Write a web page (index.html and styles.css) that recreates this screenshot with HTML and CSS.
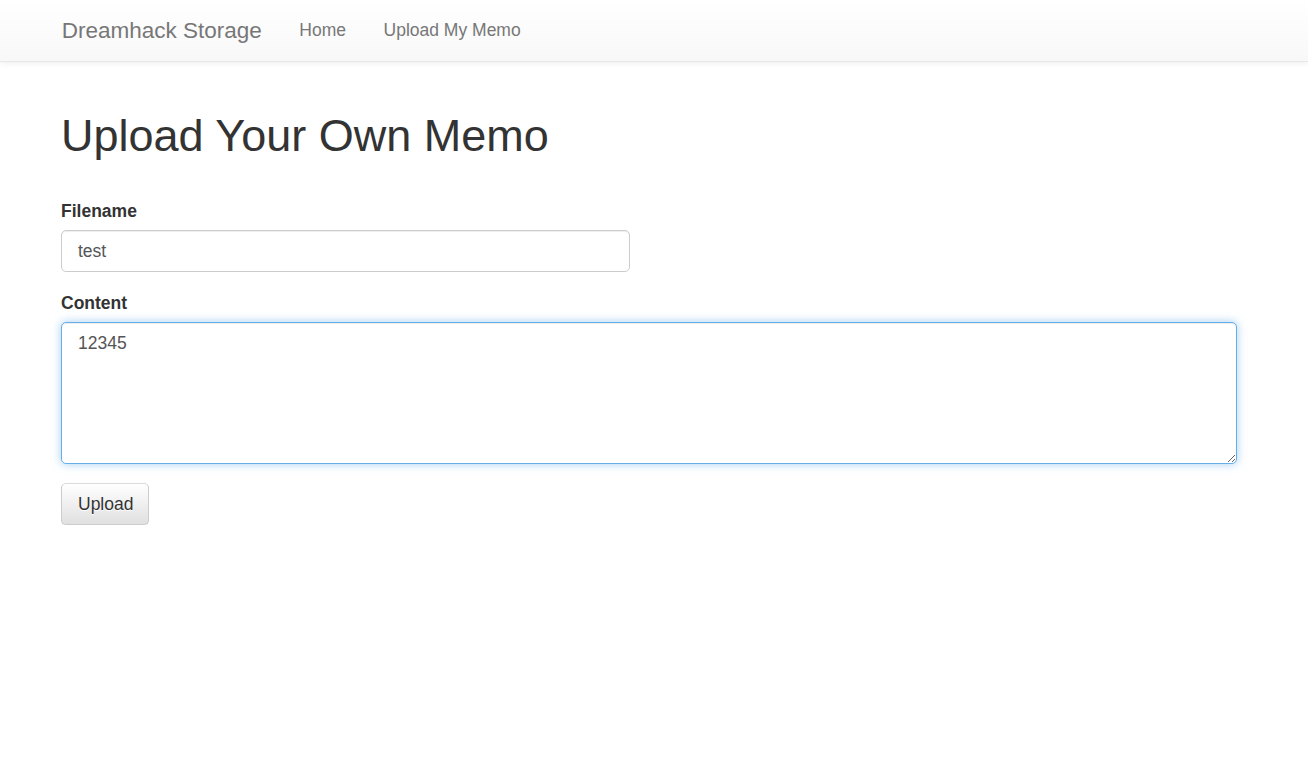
FILE: index.html
```html
<!DOCTYPE html>
<html lang="en">
<head>
<meta charset="utf-8">
<title>Dreamhack Storage</title>
<link rel="stylesheet" href="styles.css">
</head>
<body>
<nav class="navbar">
  <div class="navbar-inner">
    <a class="brand" href="#">Dreamhack Storage</a>
    <ul class="nav">
      <li><a href="#">Home</a></li>
      <li><a href="#">Upload My Memo</a></li>
    </ul>
  </div>
</nav>
<main class="container">
  <h1 class="title">Upload Your Own Memo</h1>
  <form class="memo-form">
    <div class="form-group">
      <label class="label" for="filename">Filename</label>
      <input class="field field-half" id="filename" type="text" value="test">
    </div>
    <div class="form-group">
      <label class="label" for="content">Content</label>
      <textarea class="field field-area is-focus" id="content" rows="5">12345</textarea>
    </div>
    <button class="btn" type="button">Upload</button>
  </form>
</main>
</body>
</html>
```

FILE: styles.css
```css
* { box-sizing: border-box; }
html, body { margin: 0; padding: 0; }
body {
  font-family: "Liberation Sans", Arial, Helvetica, sans-serif;
  font-size: 17.5px;
  line-height: 25px;
  color: #333;
  background: #fff;
}
.navbar {
  height: 62px;
  background-image: linear-gradient(to bottom, #ffffff 0%, #f8f8f8 100%);
  border-bottom: 1px solid #e7e7e7;
  box-shadow: inset 0 1px 0 rgba(255,255,255,.15), 0 1px 6px rgba(0,0,0,.075);
}
.navbar-inner {
  display: flex;
  align-items: flex-start;
  padding-left: 43px;
}
.brand {
  display: block;
  padding: 18px 18.75px;
  font-size: 22.5px;
  line-height: 25px;
  color: #777;
  text-decoration: none;
  text-shadow: 0 1px 0 rgba(255,255,255,.25);
}
.nav {
  display: flex;
  list-style: none;
  margin: 0;
  padding: 0;
}
.nav a {
  display: block;
  padding: 17.5px 18.75px;
  font-size: 17.5px;
  line-height: 25px;
  color: #777;
  text-decoration: none;
  text-shadow: 0 1px 0 rgba(255,255,255,.25);
}
.container {
  padding-left: 61px;
  width: 1237px;
}
.title {
  margin: 48.5px 0 39px 0;
  font-size: 45px;
  font-weight: 500;
  line-height: 49.5px;
  color: #333;
}
.form-group { margin-bottom: 18.75px; }
.label {
  display: block;
  margin-bottom: 6.25px;
  font-weight: 700;
  font-size: 17.5px;
  line-height: 25px;
}
.field {
  display: block;
  width: 100%;
  padding: 7.5px 15px 7.5px 16px;
  font-family: "Liberation Sans", Arial, Helvetica, sans-serif;
  font-size: 17.5px;
  line-height: 25px;
  color: #555;
  background: #fff;
  border: 1px solid #ccc;
  border-radius: 5px;
  box-shadow: inset 0 1px 1px rgba(0,0,0,.075);
  outline: none;
}
.field-half { width: 569px; height: 42px; }
.field-area { height: 142px; resize: vertical; }
.is-focus {
  border-color: #66afe9;
  box-shadow: inset 0 1px 1px rgba(0,0,0,.075), 0 0 10px rgba(102,175,233,.6);
}
.btn {
  display: inline-block;
  height: 42px;
  padding: 7.5px 15px 7.5px 16px;
  font-family: "Liberation Sans", Arial, Helvetica, sans-serif;
  font-size: 17.5px;
  line-height: 25px;
  color: #333;
  text-shadow: 0 1px 0 #fff;
  background-image: linear-gradient(to bottom, #ffffff 0%, #e0e0e0 100%);
  border: 1px solid #ccc;
  border-color: #dbdbdb #ccc #ccc #ccc;
  border-radius: 5px;
  box-shadow: inset 0 1px 0 rgba(255,255,255,.15), 0 1px 1px rgba(0,0,0,.075);
  cursor: pointer;
}
```
